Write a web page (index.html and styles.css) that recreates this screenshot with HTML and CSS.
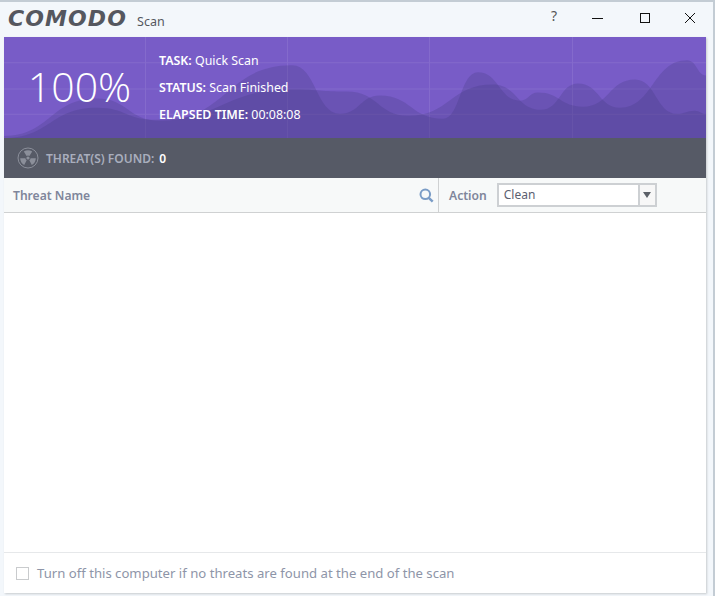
FILE: index.html
```html
<!DOCTYPE html>
<html lang="en">
<head>
  <meta charset="UTF-8">
  <title>COMODO Scan</title>
  <link rel="stylesheet" href="styles.css">
</head>
<body>
  <div class="window">
    <div class="titlebar">
      <span class="logo">COMODO</span>
      <span class="app-name">Scan</span>
      <div class="win-controls">
        <span class="win-btn help">?</span>
        <span class="win-btn"><svg width="12" height="12" viewBox="0 0 12 12"><path d="M0 6.500h11" stroke="#111" fill="none"/></svg></span>
        <span class="win-btn max"><svg width="12" height="12" viewBox="0 0 12 12"><rect x="1.500" y="1.500" width="9" height="9" stroke="#111" fill="none"/></svg></span>
        <span class="win-btn"><svg width="12" height="12" viewBox="0 0 12 12"><path d="M1 1l10 10M11 1L1 11" stroke="#111" fill="none"/></svg></span>
      </div>
    </div>

    <div class="content">
      <!-- purple summary with the chart behind it -->
      <div class="summary">
        <svg class="chart" viewBox="4 37 702 100" preserveAspectRatio="none">
          <path class="grid" d="M145.500 37V137M287.500 37V137M429.500 37V137M572.500 37V137M4 62.500H706M4 88.500H706M4 113.500H706"/>
          <path class="wave" d="M4 137L4 135C50 135 50 98 97 98C128 98 128 120 160 120C226 120 226 65 292 65C316 65 316 113 340 113C360 113 360 95 380 95C411 95 411 118 443 118C460 118 460 72 478 72C499 72 499 100 520 100C529 100 529 92 538 92C560 92 560 106 583 106C609 106 609 79 635 79C656 79 656 113 677 113C686 113 686 110 695 110C700 110 700 113 706 113L706 137Z"/>
          <path class="wave" d="M4 137C50 137 50 107 97 107C126 107 126 119 155 119C223 119 223 89 292 89C320 89 320 91 347 91C378 91 378 115 408 115C450 115 450 84 493 84C517 84 517 109 541 109C560 109 560 83 578 83C599 83 599 107 620 107C653 107 653 60 687 60C697 60 697 75 706 75L706 137Z"/>
        </svg>
        <div class="percent">100%</div>
        <div class="scan-info">
          <div><b>TASK:</b> Quick Scan</div>
          <div><b>STATUS:</b> Scan Finished</div>
          <div><b>ELAPSED TIME:</b> 00:08:08</div>
        </div>
      </div>

      <div class="threat-bar">
        <svg class="radiation" width="22" height="22" viewBox="0 0 22 22">
          <circle cx="11" cy="11" r="10" fill="none" stroke="#8b8f9a" stroke-width="1"/>
          <circle cx="11" cy="11" r="1.600" fill="#8b8f9a"/>
          <path fill="#8b8f9a" d="M6.800 4.500A7.800 7.800 0 0 1 15.200 4.500L12.400 9A2.600 2.600 0 0 0 9.600 9ZM3.200 11.300A7.800 7.800 0 0 0 7.200 18L9.700 13.300A2.600 2.600 0 0 1 8.400 11.300ZM18.800 11.300A7.800 7.800 0 0 1 14.800 18L12.300 13.300A2.600 2.600 0 0 0 13.600 11.300Z"/>
        </svg>
        <span class="threat-label">THREAT(S) FOUND:</span>
        <span class="threat-count">0</span>
      </div>

      <div class="table-head">
        <div class="col-name">
          <span>Threat Name</span>
          <svg width="15" height="15" viewBox="0 0 15 15"><circle cx="6.300" cy="6.300" r="4.800" fill="none" stroke="#7a9cc6" stroke-width="2"/><path d="M9.800 9.800l3.900 3.900" stroke="#7a9cc6" stroke-width="2.400" fill="none"/></svg>
        </div>
        <div class="col-action">
          <span>Action</span>
          <div class="select">
            <span class="select-value">Clean</span>
            <span class="select-arrow"></span>
          </div>
        </div>
      </div>

      <div class="table-body"></div>

      <div class="footer">
        <span class="checkbox"></span>
        <span>Turn off this computer if no threats are found at the end of the scan</span>
      </div>
    </div>
  </div>
</body>
</html>
```
FILE: styles.css
```css
html, body {
  margin: 0;
  height: 100%;
  overflow: hidden;
}

body {
  font-family: "Noto Sans", "Open Sans", sans-serif;
  font-size: 13px;
  background: #f3f7fb;
}

.window {
  width: 715px;
  height: 596px;
  box-sizing: border-box;
  border-top: 2px solid #c3ccd4;
  border-right: 2px solid #c3ccd4;
  padding: 0 7px 3px 4px;
  display: flex;
  flex-direction: column;
}

.titlebar {
  height: 35px;
  flex: none;
  display: flex;
  align-items: center;
  padding-left: 4px;
}

.logo {
  font-family: "DejaVu Sans", sans-serif;
  font-size: 22px;
  font-weight: 700;
  font-style: italic;
  letter-spacing: 1.100px;
  color: #55575f;
  margin-top: -2px;
}

.app-name {
  margin: 3px 0 0 10px;
  font-size: 12.500px;
  color: #55575f;
}

.win-controls {
  margin-left: auto;
  display: flex;
  margin-right: -7px;
  margin-top: -4px;
}

.win-btn {
  width: 46px;
  height: 24px;
  display: flex;
  align-items: center;
  justify-content: center;
}

.help {
  color: #555;
  font-size: 14px;
  margin-right: -2px;
  margin-left: -1px;
  margin-top: -2px;
}

.max {
  margin-left: 1px;
  margin-right: -1px;
}

.content {
  flex: 1;
  display: flex;
  flex-direction: column;
  background: #fff;
  box-shadow: 1px 1px 2px rgba(0,0,0,0.18);
}

.summary {
  position: relative;
  height: 101px;
  flex: none;
  display: flex;
  align-items: center;
  background: #785cc7;
  color: #fff;
}

.chart {
  position: absolute;
  left: 0;
  top: 0;
  width: 100%;
  height: 100%;
}

.grid {
  fill: none;
  stroke: rgba(255,255,255,0.09);
  stroke-width: 1;
}

.wave {
  fill: rgba(64,56,120,0.24);
}

.percent {
  position: relative;
  width: 151px;
  margin: -4px 4px 0 0;
  text-align: center;
  font-family: "Open Sans", sans-serif;
  font-weight: 300;
  font-size: 41px;
}

.scan-info {
  position: relative;
  display: flex;
  flex-direction: column;
  gap: 9px;
  font-size: 12.400px;
  line-height: 18px;
}

.scan-info b {
  font-weight: 600;
}

.threat-bar {
  height: 40px;
  flex: none;
  display: flex;
  align-items: center;
  background: #565a66;
  padding-left: 13px;
  font-size: 12px;
  font-weight: 600;
  color: #a9aebd;
}

.radiation {
  margin-right: 7px;
}

.threat-count {
  margin-left: 5px;
  color: #fff;
}

.table-head {
  height: 35px;
  box-sizing: border-box;
  flex: none;
  display: flex;
  background: #f7f9f9;
  border-bottom: 1px solid #cfd1d2;
  color: #7f869b;
  font-weight: 600;
  font-size: 12.100px;
}

.col-name {
  width: 435px;
  flex: none;
  box-sizing: border-box;
  display: flex;
  align-items: center;
  justify-content: space-between;
  padding: 0 4px 0 9px;
  border-right: 1px solid #cfd1d2;
}

.col-action {
  flex: 1;
  display: flex;
  align-items: center;
  padding-left: 10px;
  gap: 10px;
}

.select {
  width: 160px;
  height: 24px;
  box-sizing: border-box;
  border: 2px solid #cdd0d3;
  display: flex;
  background: #fff;
  font-weight: 400;
  color: #5b6070;
  font-size: 12px;
}

.select-value {
  flex: 1;
  padding-left: 5px;
  line-height: 20px;
  border-right: 2px solid #cdd0d3;
}

.select-arrow {
  width: 15px;
  display: flex;
  align-items: center;
  justify-content: center;
  background: #f7f7f7;
}

.select-arrow::before {
  content: "";
  border-left: 4px solid transparent;
  border-right: 4px solid transparent;
  border-top: 6px solid #5c6068;
}

.table-body {
  flex: 1;
}

.footer {
  height: 41px;
  box-sizing: border-box;
  flex: none;
  display: flex;
  align-items: center;
  gap: 8px;
  padding-left: 12px;
  border-top: 1px solid #e6e8ea;
  color: #8e95a8;
  font-size: 13.150px;
}

.checkbox {
  width: 11px;
  height: 11px;
  border: 1px solid #c9cbcd;
  background: #fff;
}
```
